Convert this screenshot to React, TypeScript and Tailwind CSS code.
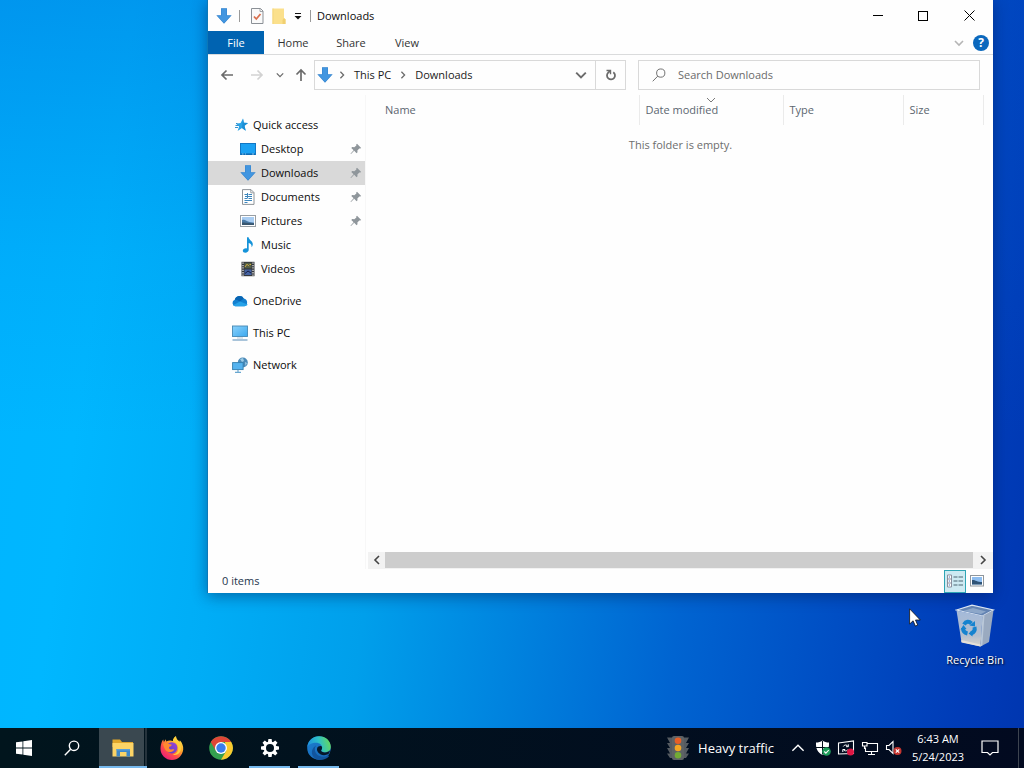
import React from "react";

type IconProps = { className?: string };

function DownArrow({ className = "size-4" }: IconProps) {
  return (
    <svg viewBox="0 0 16 16" className={className} aria-hidden="true">
      <path d="M5 .3h6v7h4.700L8 15.800.3 7.300H5z" fill="#3483cd" />
      <path d="M5.500.8h5v7h4L8 15 1.500 7.800h4z" fill="#4296e0" />
    </svg>
  );
}

function CheckDoc() {
  return (
    <svg viewBox="0 0 16 18" className="h-[18px] w-4" aria-hidden="true">
      <path d="M2.500 1.500h9l2.500 2.500v12.500H2.500z" fill="#fafafa" stroke="#8b9096" />
      <path d="M11 1.500V4.500h3" fill="none" stroke="#8b9096" strokeWidth="0.8" />
      <path d="M5 9.500l2.300 2.500 4.200-5" fill="none" stroke="#d9704f" strokeWidth="1.800" />
    </svg>
  );
}

function PlainFolder() {
  return (
    <svg viewBox="0 0 16 18" className="h-[18px] w-4" aria-hidden="true">
      <path d="M1.500 1.500h11.500v9.500l1.500 1.500v4.500H1.500z" fill="#fbe08c" />
      <path d="M13 11l1.500 1.500v4.500h-3v-4z" fill="#f1d071" />
      <path d="M1.500 1.500h1v15.500h-1z" fill="#f3d67d" />
    </svg>
  );
}

function Chevron({ dir, className = "size-2", width = 1.6 }: { dir: "up" | "down" | "left" | "right"; className?: string; width?: number }) {
  const paths = { up: "M1 7l4-4 4 4", down: "M1 3l4 4 4-4", left: "M7 1L3 5l4 4", right: "M3 1l4 4-4 4" };
  return (
    <svg viewBox="0 0 10 10" className={className} aria-hidden="true">
      <path d={paths[dir]} fill="none" stroke="currentColor" strokeWidth={width} />
    </svg>
  );
}

function Arrow({ dir }: { dir: "left" | "right" | "up" }) {
  const paths = {
    left: "M13 7H2M6.500 2.500L2 7l4.500 4.500",
    right: "M1 7h11M7.500 2.500L12 7l-4.500 4.500",
    up: "M7 13V2M2.500 6.500L7 2l4.500 4.500",
  };
  return (
    <svg viewBox="0 0 14 14" className="size-3.5" aria-hidden="true">
      <path d={paths[dir]} fill="none" stroke="currentColor" strokeWidth="1.700" />
    </svg>
  );
}

function Refresh() {
  return (
    <svg viewBox="0 0 12 12" className="size-3" aria-hidden="true">
      <path d="M8.300 3.200A4 4 0 1 1 3.200 3.600L5 2" fill="none" stroke="currentColor" strokeWidth="1.800" />
      <path d="M1.500 1.500h4v3.700" fill="none" stroke="currentColor" strokeWidth="1.400" />
    </svg>
  );
}

function Magnifier({ className = "size-3.5", width = 1.400 }: IconProps & { width?: number }) {
  return (
    <svg viewBox="0 0 16 16" className={className} aria-hidden="true">
      <circle cx="10" cy="5.800" r="4.700" fill="none" stroke="currentColor" strokeWidth={width} />
      <path d="M6.600 9.300L.8 15.200" stroke="currentColor" strokeWidth={width} />
    </svg>
  );
}

function Pin() {
  return (
    <svg viewBox="0 0 12 12" className="size-3" aria-hidden="true">
      <path d="M7 .8L11.200 5l-1 .6-.9-.2-1.900 2 .1 1.900-.9.900L4.200 7.800 1 11 .6 11l.1-.6 2.900-3.200L1.300 5l.9-.9 2.100.1 2.100-1.800-.2-.9z" fill="#8f969b" />
    </svg>
  );
}

function Star() {
  return (
    <svg viewBox="0 0 16 16" className="size-4" aria-hidden="true">
      <path d="M10 1.500l.8 4.200 4.200.2-3.500 2.900 1.200 5-3.700-2.700-4.400 3 1.500-4.500-3-2.800 4.500-.7z" fill="#2aa3e6" />
      <path d="M2.500 8.500h3M2 10.500h3M3 6.500h1.500" stroke="#1c86cb" strokeWidth=".9" />
      <path d="M10 1.500l.8 4.200 4.200.2-3.500 2.900 1.200 5-3.700-2.700z" fill="#1b8fd6" />
    </svg>
  );
}

function DesktopIcon() {
  return (
    <svg viewBox="0 0 16 16" className="size-4" aria-hidden="true">
      <rect x=".5" y="2.500" width="15" height="11" fill="#1ba1f3" stroke="#1277c4" />
      <path d="M1 12.500h14v1H1z" fill="#0a62a8" />
      <path d="M2 13h1.500M5 13h1M12 13h2" stroke="#bfe6ff" strokeWidth=".7" />
    </svg>
  );
}

function DocIcon() {
  return (
    <svg viewBox="0 0 16 16" className="size-4" aria-hidden="true">
      <path d="M2.500.6h8.500l3 3v11.800H2.500z" fill="#fff" stroke="#82888d" strokeWidth=".9" />
      <path d="M10.800.8v3h3" fill="none" stroke="#82888d" strokeWidth=".8" />
      <path d="M4.500 5.500h2.500M8.500 5.500H12M5 7.500h7M4.500 9.500h2.500M8.500 9.500H12M4.500 11.500h7.500M4.500 13.500h3M7.500 4v5.500" stroke="#3c86bd" strokeWidth="1" />
    </svg>
  );
}

function PictureIcon({ className = "size-4" }: IconProps) {
  return (
    <svg viewBox="0 0 16 16" className={className} aria-hidden="true">
      <rect x=".5" y="2.500" width="15" height="11" fill="#fff" stroke="#989ea3" />
      <rect x="2" y="4" width="12" height="8" fill="#a9cdf2" />
      <path d="M2 7c3-1 4 .5 6 1.500s4 .8 6 1.200V11H2z" fill="#4a7aa6" />
      <path d="M2 9.500c3-.5 8 .8 12 .8V12H2z" fill="#38566f" />
    </svg>
  );
}

function MusicIcon() {
  return (
    <svg viewBox="0 0 16 16" className="size-4" aria-hidden="true">
      <path d="M7 .3h1.600c.2 2.800 4.700 4 4.200 7.500-.2 1.300-.8 2-1.300 2.500.5-2.300-.8-3.800-2.800-4.400v7.200c0 1.500-1.500 2.600-3.400 2.600-1.500 0-2.500-.8-2.500-2 0-1.700 2.200-2.700 4.200-2.200z" fill="#1593d9" />
    </svg>
  );
}

function VideoIcon() {
  return (
    <svg viewBox="0 0 16 16" className="size-4" aria-hidden="true">
      <rect x="1.500" y=".8" width="13" height="14.400" fill="#34373b" />
      <path d="M3 1.500v13.500M13 1.500v13.500" stroke="#eee" strokeWidth="1.200" strokeDasharray="1.300 1.100" />
      <rect x="4.500" y="1.800" width="7" height="5.500" fill="#525d46" />
      <rect x="4.500" y="8.500" width="7" height="5.500" fill="#4563a2" />
      <path d="M5 6l2-2.800 2 2M9.500 3.500h1.500" stroke="#d2ae3e" fill="none" />
      <path d="M5 12.500l3-2.500 3 2" stroke="#171e43" fill="none" />
    </svg>
  );
}

function CloudIcon() {
  return (
    <svg viewBox="0 0 16 16" className="size-4" aria-hidden="true">
      <path d="M2.800 6.800A4.900 4.900 0 0 1 11.800 5.500 4 4 0 0 1 12.500 13.200H3.300A3.300 3.300 0 0 1 2.800 6.800z" fill="#1380d0" />
      <path d="M2.800 6.800A4.900 4.900 0 0 1 11.800 5.500L8 8.500 5 7z" fill="#0965b3" />
      <path d="M1 12.200l7-3.800 7.700 3.200c-.7 1-1.900 1.600-3.200 1.600H3.300c-.9 0-1.700-.4-2.300-1z" fill="#26a2e8" />
    </svg>
  );
}

function PcIcon() {
  return (
    <svg viewBox="0 0 16 16" className="size-4" aria-hidden="true">
      <defs>
        <linearGradient id="pcScreen" x1="0" x2="1" y1="0" y2="1">
          <stop stopColor="#8bd2fb" />
          <stop offset="1" stopColor="#3ba8ef" />
        </linearGradient>
      </defs>
      <rect x=".5" y="1" width="15" height="10.500" fill="url(#pcScreen)" stroke="#4588b4" strokeWidth=".9" />
      <path d="M5 13h6" stroke="#b7cbd9" />
      <path d="M.5 15h15" stroke="#6f9dc2" strokeWidth="1.200" />
    </svg>
  );
}

function NetworkIcon() {
  return (
    <svg viewBox="0 0 16 16" className="size-4" aria-hidden="true">
      <circle cx="10.800" cy="5.500" r="5" fill="#4b8ab8" />
      <path d="M8 2l3-1 1 3-2 1zM13 5l2 1-1.500 3z" fill="#9ccbe6" />
      <rect x=".6" y="5.600" width="10.500" height="7" fill="#55b3ef" stroke="#347fae" strokeWidth=".9" />
      <path d="M6 13v2M3 15.300h6" stroke="#69a7d0" strokeWidth="1.200" />
    </svg>
  );
}

function RecycleBin() {
  return (
    <svg viewBox="0 0 40 44" className="h-11 w-10" aria-hidden="true">
      <defs>
        <linearGradient id="binFront" x1="0" y1="0" x2="0" y2="1">
          <stop stopColor="#a3b9d9" />
          <stop offset=".7" stopColor="#b4bfce" />
          <stop offset="1" stopColor="#d8d4cb" />
        </linearGradient>
      </defs>
      <path d="M1.500 6L17 1.200l21.500 4.800L27.500 12z" fill="#6383b2" stroke="#dce6f2" strokeWidth="1.200" />
      <path d="M8 7l10-3 13 3.500-5 2.500z" fill="#8da7c9" />
      <path d="M1.500 6.500L27.500 12l-2 30.500L6.500 38z" fill="url(#binFront)" />
      <path d="M27.500 12l11-5.700L34 38l-8.500 4.500z" fill="#9aaac0" />
      <path d="M27.500 12l2-1-2.200 30.500-1.800 1z" fill="#bac8d9" />
      <path d="M6.300 36L25.500 40.500v2L6.500 38.500z" fill="#e5e1d8" />
      <g fill="none" stroke="#1583cf" strokeWidth="4">
        <path d="M9 20.500c2-3.300 5-3.500 7.500-1" />
        <path d="M19.500 23c.8 3.500-.7 5.500-3.500 6.500" />
        <path d="M12.500 29.500c-3-.7-4.500-2.500-4.500-5.500" />
      </g>
      <path d="M14.500 21.500l5.500 1V17zM17.500 26v6.500l-4-3zM5.500 25.500l3-4.500 3 4z" fill="#1583cf" />
    </svg>
  );
}

function WindowsLogo() {
  return (
    <svg viewBox="0 0 16 16" className="size-4" aria-hidden="true">
      <path d="M0 2.300l6.500-.9v6.200H0zM7.300 1.300L16 0v7.600H7.300zM0 8.400h6.500v6.200L0 13.700zM7.300 8.400H16V16l-8.700-1.300z" fill="#fff" />
    </svg>
  );
}

function ExplorerIcon() {
  return (
    <svg viewBox="0 0 24 20" className="h-5 w-6" aria-hidden="true">
      <path d="M1.500 1.500h7.500l2 2.500h11v5H1.500z" fill="#dfa62b" />
      <path d="M1.500 5h21v13.500h-21z" fill="#fcd466" />
      <path d="M5.500 18.500v-7.500h13.500v7.500h-3.500v-4.500h-6.500v4.500z" fill="#3f88c8" />
      <path d="M5.500 11h13.500v1.500H5.500z" fill="#5a9fd6" />
    </svg>
  );
}

function Firefox() {
  return (
    <svg viewBox="0 0 24 24" className="size-6" aria-hidden="true">
      <defs>
        <linearGradient id="ffBody" x1=".85" y1=".1" x2=".2" y2=".95">
          <stop stopColor="#ffe44b" />
          <stop offset=".35" stopColor="#ffa42b" />
          <stop offset=".65" stopColor="#ff4f48" />
          <stop offset="1" stopColor="#eb1c79" />
        </linearGradient>
        <linearGradient id="ffCore" x1="0" y1="1" x2="1" y2="0">
          <stop stopColor="#5041c8" />
          <stop offset="1" stopColor="#a244d6" />
        </linearGradient>
      </defs>
      <path d="M2.200 5l1-1.600.7 2.500 2-2.700.3 2.300C8 4.500 10.500 4 13 5c0-2.200 1.300-3.800 3-4.800-.1 2.600 2.200 4 3.500 5.500l.3-1.400c2.500 2.600 3.700 6 3.400 9.200C22.700 19.300 18 24 12 24 5.500 24 .6 19 .5 13c0-3 .7-5.600 1.700-8z" fill="url(#ffBody)" />
      <circle cx="11.800" cy="11.800" r="5.600" fill="url(#ffCore)" />
      <path d="M3 8c2-1.800 4.200-1.800 6 0l2.600.4c.4.900-.7 1.900-2.300 2.300-.6 1-.3 2 .8 2.500 1.400.6 2.700-.3 4.200.2-1.200 2.500-4.300 3.300-6.700 2.400C5.300 14.800 4 12 3 8z" fill="#ff8a30" />
      <path d="M13 5c2.500 1.200 5.200 3.300 5.200 7.500 0 3.500-2.600 5.800-5.700 6.200 4.500 1.200 8.100-1.300 8.600-6.100.3-3-1.200-5.200-2.800-7C16.900 4.200 16 3 16 .2c-1.700 1-3 2.600-3 4.800z" fill="#ffcf3a" />
    </svg>
  );
}

function Chrome() {
  return (
    <svg viewBox="0 0 24 24" className="size-6" aria-hidden="true">
      <circle cx="12" cy="12" r="11.800" fill="#34a04f" />
      <path d="M22.200 6A11.800 11.800 0 0 1 12 23.800L17.200 15 16 6z" fill="#fbc92f" />
      <path d="M12 6h10.200a12 12 0 0 0-20.400 0L7 15z" fill="#df4637" />
      <circle cx="12" cy="12" r="6" fill="#fff" />
      <circle cx="12" cy="12" r="4.700" fill="#3b7ded" />
    </svg>
  );
}

function Gear() {
  const teeth = [0, 45, 90, 135, 180, 225, 270, 315];
  return (
    <svg viewBox="0 0 20 20" className="size-5" aria-hidden="true">
      {teeth.map((a) => (
        <path key={a} d="M8.400 1h3.200l.6 4H7.800z" fill="#fff" transform={`rotate(${a} 10 10)`} />
      ))}
      <circle cx="10" cy="10" r="5.200" fill="none" stroke="#fff" strokeWidth="2.400" />
    </svg>
  );
}

function Edge() {
  return (
    <svg viewBox="0 0 24 24" className="size-6" aria-hidden="true">
      <defs>
        <linearGradient id="edgeTop" x1="0" y1=".5" x2="1" y2=".3">
          <stop stopColor="#1d8ee0" />
          <stop offset=".5" stopColor="#2dc0c8" />
          <stop offset="1" stopColor="#68d957" />
        </linearGradient>
        <linearGradient id="edgeLow" x1="0" y1="0" x2="1" y2="1">
          <stop stopColor="#1b7fd1" />
          <stop offset="1" stopColor="#1764b4" />
        </linearGradient>
      </defs>
      <circle cx="12" cy="12" r="11.800" fill="url(#edgeLow)" />
      <path d="M.3 11C1 4.500 6 .2 12 .2c6.800 0 11.800 4.800 11.800 10.500 0 3.600-2.700 5.700-5.800 5.700-2.400 0-3.900-.8-3.900-1.600 0-.7 1-1.200 1-3.300 0-2.500-2.500-4.800-6-4.800C5 6.700 1.500 8.500.3 11z" fill="url(#edgeTop)" />
      <path d="M9.300 9.500c-2 2-2 5.800.3 8.500 2.500 2.900 7.500 3.700 11.500 1.500.6-.3 1.200.2.700.9-2.300 2.500-6 3.800-9.800 3.400C5.500 23.300 3.300 16.500 6 12.500c.8-1.300 2-2.400 3.300-3z" fill="#12559e" />
      <path d="M15.100 11.500c0 2.100-1 2.600-1 3.300 0 .8 1.500 1.600 3.900 1.600 1.900 0 4-.7 5.100-2.100-.3 1.200-.8 2.600-1.600 3.800-3.700 1.800-8 1.300-10.300-1.500-1.800-2.100-1.600-4.900.2-6 1.900-1.100 3.700-.6 3.700.9z" fill="#06182a" />
    </svg>
  );
}

function TrafficLight() {
  return (
    <svg viewBox="0 0 24 24" className="size-6" aria-hidden="true">
      <path d="M1 1.500h22l-3 5.500h3L20 12h3l-3 5.500h3L20 22H4l-3-4.500h3L1 12h3L1 7h3z" fill="#555b61" />
      <rect x="6" y="0" width="12" height="24" rx="2" fill="#5e6265" />
      <circle cx="12" cy="4.700" r="3.300" fill="#e85f26" />
      <circle cx="12" cy="12" r="3.300" fill="#f5a623" />
      <circle cx="12" cy="19.300" r="3.300" fill="#72ab35" />
    </svg>
  );
}

function Shield() {
  return (
    <svg viewBox="0 0 16 16" className="size-4" aria-hidden="true">
      <path d="M7.500.5C9.500 2 11.500 2.500 14 2.500c.3 6-1.500 10-6.500 12.500C2.500 12.500.7 8.500 1 2.500c2.500 0 4.500-.5 6.500-2z" fill="#fff" />
      <path d="M7.500 1v13.500M1 7.500h13" stroke="#031019" />
      <circle cx="11.500" cy="11.500" r="4.300" fill="#1f9d5b" />
      <path d="M9.300 11.500l1.600 1.700 2.900-3.200" stroke="#fff" strokeWidth="1.100" fill="none" />
    </svg>
  );
}

function UpdateIcon() {
  return (
    <svg viewBox="0 0 18 16" className="h-4 w-[18px]" aria-hidden="true">
      <path d="M1.500 3L16.500 1v12.500L1.500 14z" fill="none" stroke="#fff" strokeWidth="1.100" />
      <path d="M11 6.500A2.600 2.600 0 0 0 6.300 6.500M6.300 9.500a2.600 2.600 0 0 0 4.400.3M11.300 4.300v2.400H9M5.800 12V9.500h2.400" stroke="#fff" fill="none" strokeWidth="1" />
      <circle cx="13.500" cy="12" r="3.500" fill="#df1744" />
    </svg>
  );
}

function EthernetIcon() {
  return (
    <svg viewBox="0 0 18 16" className="h-4 w-[18px]" aria-hidden="true">
      <path d="M6 3.500h10.500v8H4.500v-4M10.500 11.500v3M7 14.500h7" fill="none" stroke="#fff" strokeWidth="1.100" />
      <path d="M1.500 2.500h4.500v3.500H1.500zM3.500 6v3" fill="none" stroke="#fff" strokeWidth="1.100" />
    </svg>
  );
}

function MutedIcon() {
  return (
    <svg viewBox="0 0 18 16" className="h-4 w-[18px]" aria-hidden="true">
      <path d="M1.500 5.500h2.500l4-4v12l-4-4H1.500z" fill="none" stroke="#fff" strokeWidth="1.100" />
      <circle cx="12.500" cy="11" r="4" fill="#c5352f" />
      <path d="M10.800 9.300l3.400 3.400M14.200 9.300l-3.400 3.400" stroke="#fff" strokeWidth="1.200" />
    </svg>
  );
}

type Place = { label: string; icon: React.ReactNode; pinned?: boolean; selected?: boolean };

const quickPlaces: Place[] = [
  { label: "Desktop", icon: <DesktopIcon />, pinned: true },
  { label: "Downloads", icon: <DownArrow />, pinned: true, selected: true },
  { label: "Documents", icon: <DocIcon />, pinned: true },
  { label: "Pictures", icon: <PictureIcon />, pinned: true },
  { label: "Music", icon: <MusicIcon /> },
  { label: "Videos", icon: <VideoIcon /> },
];

const otherPlaces: Place[] = [
  { label: "OneDrive", icon: <CloudIcon /> },
  { label: "This PC", icon: <PcIcon /> },
  { label: "Network", icon: <NetworkIcon /> },
];

function TitleBar() {
  return (
    <header className="flex h-[31px] shrink-0 items-center pr-px pl-2">
      <DownArrow />
      <span className="ml-[7px] h-3 w-px bg-[#9a9a9a]" />
      <button aria-label="Properties" className="ml-[9px]"><CheckDoc /></button>
      <button aria-label="New folder" className="ml-1.5"><PlainFolder /></button>
      <button aria-label="Customize Quick Access Toolbar" className="ml-[7px]">
        <svg viewBox="0 0 8 8" className="size-2" aria-hidden="true">
          <path d="M1 1.500h6" stroke="#111" />
          <path d="M.5 4h7L4 7.500z" fill="#111" />
        </svg>
      </button>
      <span className="ml-2 h-3 w-px bg-[#9a9a9a]" />
      <h1 className="ml-1.5 flex-1">Downloads</h1>
      <div className="flex h-full">
        <button aria-label="Minimize" className="flex w-[45px] items-center justify-center">
          <span className="h-px w-2.5 bg-black" />
        </button>
        <button aria-label="Maximize" className="flex w-[46px] items-center justify-center">
          <span className="size-2.5 border border-black" />
        </button>
        <button aria-label="Close" className="flex w-[46px] items-center justify-center">
          <svg viewBox="0 0 11 11" className="size-[11px]" aria-hidden="true">
            <path d="M.5.5l10 10M10.500.5l-10 10" stroke="#000" />
          </svg>
        </button>
      </div>
    </header>
  );
}

function RibbonTabs() {
  return (
    <div className="flex h-6 shrink-0 items-stretch border-b border-[#dadbdc] text-[#333]">
      <button className="w-14 bg-[#0063b1] text-white">File</button>
      <button className="w-[58px]">Home</button>
      <button className="w-[58px]">Share</button>
      <button className="w-[54px]">View</button>
      <div className="ml-auto flex items-center gap-[9px] pr-1">
        <button aria-label="Expand the Ribbon" className="text-[#b5b5b5]"><Chevron dir="down" className="size-2.5" /></button>
        <button aria-label="Help" className="flex size-4 items-center justify-center rounded-full bg-[#0b68bd] text-xs font-bold text-white">?</button>
      </div>
    </div>
  );
}

function NavigationRow() {
  return (
    <div className="flex h-10 shrink-0 items-center pr-[13px] text-[#6b6b6b]">
      <button aria-label="Back" className="ml-3"><Arrow dir="left" /></button>
      <button aria-label="Forward" className="ml-4 text-[#d2d2d2]"><Arrow dir="right" /></button>
      <button aria-label="Recent locations" className="ml-3"><Chevron dir="down" /></button>
      <button aria-label="Up" className="ml-2.5"><Arrow dir="up" /></button>
      <div className="ml-1.5 grid min-w-0 flex-1 grid-cols-[312fr_342fr] gap-3">
        <div className="flex h-[30px] min-w-0 items-center border border-[#d9d9d9] pl-0.5 text-[#1b1b1b]">
          <DownArrow />
          <span className="ml-[5px] text-[#6b6b6b]"><Chevron dir="right" /></span>
          <button className="ml-2">This PC</button>
          <span className="ml-2 text-[#6b6b6b]"><Chevron dir="right" /></span>
          <button className="ml-2">Downloads</button>
          <button aria-label="Previous locations" className="mr-2 ml-auto text-[#6b6b6b]"><Chevron dir="down" className="size-3" /></button>
          <button aria-label="Refresh" className="flex h-full w-[30px] items-center justify-center border-l border-[#d9d9d9] text-[#6b6b6b]"><Refresh /></button>
        </div>
        <label className="flex h-[30px] min-w-0 items-center border border-[#d9d9d9] pl-[13px]">
          <Magnifier width={1.1} />
          <input type="search" aria-label="Search Downloads" placeholder="Search Downloads" className="ml-3 min-w-0 flex-1 outline-none placeholder:text-[#6b6b6b]" />
        </label>
      </div>
    </div>
  );
}

function Sidebar() {
  return (
    <nav className="w-[158px] shrink-0 border-r border-[#f7f7f7] pt-[18px]">
      <a href="#quick" className="flex h-6 items-center gap-1 pl-[25px]"><Star />Quick access</a>
      <ul>
        {quickPlaces.map((p) => (
          <li key={p.label}>
            <a href={`#${p.label}`} className={p.selected ? "flex h-6 items-center gap-[5px] bg-[#d9d9d9] pr-[3px] pl-8" : "flex h-6 items-center gap-[5px] pr-[3px] pl-8"}>
              {p.icon}
              <span className="flex-1">{p.label}</span>
              {p.pinned && <Pin />}
            </a>
          </li>
        ))}
      </ul>
      <ul className="flex flex-col gap-2 pt-2">
        {otherPlaces.map((p) => (
          <li key={p.label}>
            <a href={`#${p.label}`} className="flex h-6 items-center gap-[5px] pl-6">{p.icon}{p.label}</a>
          </li>
        ))}
      </ul>
    </nav>
  );
}

function FileList() {
  return (
    <main className="flex min-w-0 flex-1 flex-col pl-0.5">
      <table className="w-full table-fixed border-collapse text-left text-[#5c6670]">
        <colgroup>
          <col />
          <col className="w-36" />
          <col className="w-[120px]" />
          <col className="w-20" />
          <col className="w-2.5" />
        </colgroup>
        <thead>
          <tr className="h-[30px]">
            <th className="border-r border-[#ebebeb] pl-[17px] font-normal">Name</th>
            <th className="relative border-r border-[#ebebeb] pl-1.5 font-normal">
              <span className="absolute inset-x-0 top-0 flex justify-center text-[#7a7a7a]"><Chevron dir="down" className="size-2.5" width={1} /></span>
              Date modified
            </th>
            <th className="border-r border-[#ebebeb] pl-1.5 font-normal">Type</th>
            <th className="border-r border-[#ebebeb] pl-1.5 font-normal">Size</th>
            <td />
          </tr>
        </thead>
        <tbody>
          <tr className="h-10 text-center text-[#6d6d6d]"><td colSpan={5}>This folder is empty.</td></tr>
        </tbody>
      </table>
      <div className="mt-auto flex h-[17px] shrink-0 bg-[#f2f2f2] pb-px text-[#444]">
        <button aria-label="Scroll left" className="flex w-[17px] items-center justify-center"><Chevron dir="left" className="size-2.5" /></button>
        <span className="flex-1 bg-[#cdcdcd]" />
        <button aria-label="Scroll right" className="flex w-5 items-center justify-center"><Chevron dir="right" className="size-2.5" /></button>
      </div>
    </main>
  );
}

function StatusBar() {
  return (
    <footer className="flex h-6 shrink-0 items-center pr-[9px] pl-3.5 text-[#26364d]">
      <span className="flex-1">0 items</span>
      <button aria-label="Details view" className="flex h-[23px] w-[22px] items-center justify-center border border-[#2ea5b5] bg-[#cdeaf2]">
        <svg viewBox="0 0 16 14" className="h-3.5 w-4" aria-hidden="true">
          <path d="M.5 1h4v12h-4zM.5 5h4M.5 9h4" fill="#fff" stroke="#8b8f9d" />
          <path d="M1.800 3h1.200M1.800 7h1.200M1.800 11h1.200" stroke="#3c6fb8" />
          <path d="M6.500 3h4M11.500 3H16M6.500 7h4M11.500 7H16M6.500 11h4M11.500 11H16" stroke="#4b6570" />
        </svg>
      </button>
      <button aria-label="Thumbnail view" className="ml-1">
        <svg viewBox="0 0 14 12" className="h-3 w-3.5" aria-hidden="true">
          <rect x=".5" y=".5" width="13" height="10.500" fill="#fff" stroke="#8f969c" />
          <rect x="2" y="2" width="10" height="7.500" fill="#8dbdf0" />
          <path d="M2 5c3-.5 5 2 10 2v2.500H2z" fill="#2f5376" />
        </svg>
      </button>
    </footer>
  );
}

function TaskButton({ label, running, children }: { label: string; running?: boolean; children: React.ReactNode }) {
  return (
    <button aria-label={label} className="relative flex w-[49px] items-center justify-center">
      {children}
      {running && <span className="absolute inset-x-1 bottom-0 h-0.5 bg-[#76b9ed]" />}
    </button>
  );
}

function Taskbar() {
  return (
    <footer className="flex h-10 shrink-0 items-stretch bg-linear-to-r from-[#01151d] to-[#020a20] text-white">
      <button aria-label="Start" className="flex w-12 items-center justify-center"><WindowsLogo /></button>
      <button aria-label="Search" className="flex w-12 items-center justify-center"><Magnifier className="size-4" /></button>
      <button aria-label="File Explorer" className="ml-[3px] flex w-12 border-b-2 border-[#76b9ed]">
        <span className="flex h-full w-[45px] items-center justify-center bg-[#3a4850] pl-0.5 pt-0.5"><ExplorerIcon /></span>
        <span className="ml-px h-full flex-1 bg-[#25333c]" />
      </button>
      <TaskButton label="Firefox"><Firefox /></TaskButton>
      <TaskButton label="Chrome"><Chrome /></TaskButton>
      <TaskButton label="Settings" running><Gear /></TaskButton>
      <TaskButton label="Edge" running><Edge /></TaskButton>
      <div className="ml-auto flex items-center">
        <button className="flex items-center gap-2 text-[13px]"><TrafficLight />Heavy traffic</button>
        <button aria-label="Show hidden icons" className="ml-[17px]"><Chevron dir="up" className="size-3.5" width={1} /></button>
        <div className="ml-2.5 flex items-center gap-1.5">
          <Shield /><UpdateIcon /><EthernetIcon /><MutedIcon />
        </div>
        <time className="ml-2 flex w-[54px] flex-col text-center leading-[18px]"><span>6:43 AM</span><span>5/24/2023</span></time>
        <button aria-label="Notifications" className="ml-4">
          <svg viewBox="0 0 18 18" className="size-[18px]" aria-hidden="true">
            <path d="M1 2h16v11.500h-5.500L9 16l-2.500-2.500H1z" fill="none" stroke="#fff" strokeWidth="1.200" />
          </svg>
        </button>
        <span className="ml-[19px] h-10 w-px bg-[#3d4450]" />
        <span className="w-[5px]" />
      </div>
    </footer>
  );
}

export default function App() {
  return (
    <div className="flex h-screen flex-col overflow-hidden bg-[#00aef5] font-['Open_Sans','Noto_Sans',sans-serif] text-[11px] leading-4 text-[#0c0c0c]">
      <div className="relative min-h-0 flex-1 bg-[linear-gradient(to_bottom,rgba(0,80,200,0.3)_0%,rgba(0,100,210,0.1)_35%,rgba(0,100,210,0)_60%),linear-gradient(98deg,#00b4ff_0%,#00b7ff_12%,#00adf6_26%,#009feb_40%,#0084df_53%,#0064d1_68%,#004ec4_82%,#003cb8_94%,#0036b0_100%)]">
        <section aria-label="Downloads window" className="absolute top-0 right-[31px] bottom-[135px] left-[207px] flex flex-col border-l border-[#0c78b8] bg-[#fefefe] shadow-[0_3px_14px_rgba(0,20,70,0.45)]">
          <TitleBar />
          <RibbonTabs />
          <NavigationRow />
          <div className="flex min-h-0 flex-1">
            <Sidebar />
            <FileList />
          </div>
          <StatusBar />
        </section>
        <a href="#bin" className="absolute right-3 bottom-[60px] flex w-[74px] flex-col items-center gap-1 text-white [text-shadow:1px_1px_2px_#000]">
          <RecycleBin />
          Recycle Bin
        </a>
        <svg viewBox="0 0 12 19" className="absolute right-[103px] bottom-[101px] h-[19px] w-3" aria-hidden="true">
          <path d="M.6.800v15.200l3.500-3.200 2.300 5.300 2.300-1-2.200-5.100h4.800z" fill="#fff" stroke="#111" strokeWidth=".8" />
        </svg>
      </div>
      <Taskbar />
    </div>
  );
}
